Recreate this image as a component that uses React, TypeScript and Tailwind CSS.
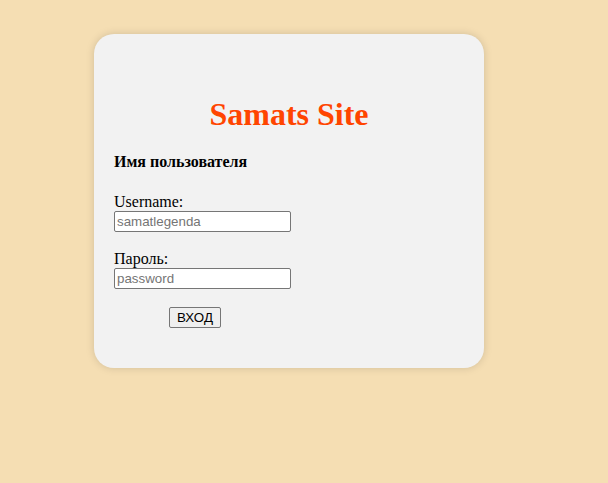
import React from 'react';

const App: React.FC = () => {
    return (
        <div className="min-h-[483px] w-full bg-[#f5deb3] pt-[34px] pl-[94px] font-['Liberation_Serif',serif] text-black">
            <div className="w-[390px] h-[334px] rounded-[20px] bg-[#f2f2f2] shadow-[0_0_8px_rgba(0,0,0,0.15)] pl-[20px] pt-[62px] flex flex-col">
                {/* Заголовок */}
                <h1 className="h-[37px] -ml-[20px] text-center text-[32px] leading-[37px] font-bold text-[#ff4500]">
                    Samats Site
                </h1>

                <h3 className="mt-[20px] h-[18px] text-[16px] leading-[18px] font-bold">
                    Имя пользователя
                </h3>

                <form className="flex flex-col items-start" onSubmit={(e) => e.preventDefault()}>
                    <label className="mt-[22px] h-[18px] text-[16px] leading-[18px]">Username:</label>
                    <input
                        type="text"
                        placeholder="samatlegenda"
                        className="w-[177px] h-[21px] px-[2px] border border-[#767676] rounded-[2px] bg-white text-[13.33px] font-['Liberation_Sans',Arial,sans-serif] placeholder:text-[#757575] outline-none"
                    />

                    <label className="mt-[18px] h-[18px] text-[16px] leading-[18px]">Пароль:</label>
                    <input
                        type="password"
                        placeholder="password"
                        className="w-[177px] h-[21px] px-[2px] border border-[#767676] rounded-[2px] bg-white text-[13.33px] font-['Liberation_Sans',Arial,sans-serif] placeholder:text-[#757575] outline-none"
                    />

                    <button
                        type="submit"
                        className="mt-[18px] ml-[55px] h-[21px] w-[52px] border border-[#767676] rounded-[2px] bg-[#efefef] text-[13.33px] leading-[17px] font-['Liberation_Sans',Arial,sans-serif]"
                    >
                        ВХОД
                    </button>
                </form>
            </div>
        </div>
    );
};

export default App;
